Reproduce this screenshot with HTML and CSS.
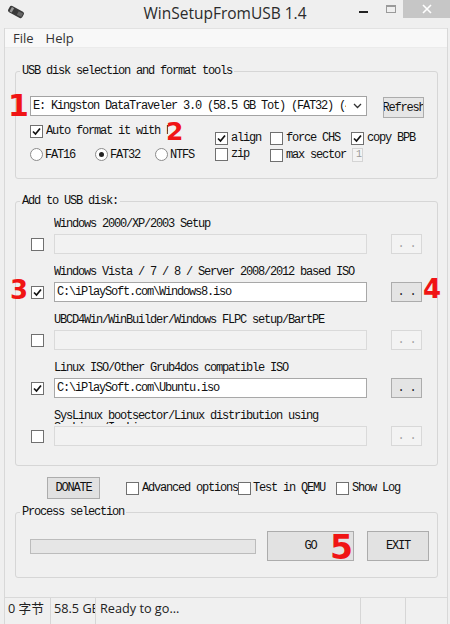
FILE: index.html
```
<!DOCTYPE html>
<html>
<head>
<meta charset="utf-8">
<title>WinSetupFromUSB 1.4</title>
<link rel="stylesheet" href="styles.css">
</head>
<body>
<div class="window">
  <div class="titlebar">
    <div class="tb-left">
      <svg class="app-icon" width="18" height="14" viewBox="0 0 18 14">
        <g transform="rotate(28 9 7)">
          <rect x="1" y="3.5" width="16" height="7" rx="2" fill="#3a3a3a"/>
          <rect x="3" y="4.5" width="2.5" height="5" fill="#9a9a9a"/>
          <rect x="11" y="5" width="5" height="4" fill="#666"/>
        </g>
      </svg>
    </div>
    <div class="title">WinSetupFromUSB 1.4</div>
    <div class="tb-right">
      <span class="ctl-min"></span>
      <span class="ctl-max"></span>
      <span class="ctl-close">
        <svg width="10" height="10" viewBox="0 0 10 10"><path d="M1 1L9 9M9 1L1 9" stroke="#fff" stroke-width="1.6"/></svg>
      </span>
    </div>
  </div>

  <div class="client">
    <div class="menubar">
      <span class="menu-item">File</span>
      <span class="menu-item">Help</span>
    </div>

    <div class="main">
      <fieldset class="group">
        <legend>USB disk selection and format tools</legend>
        <div class="usb-body">
          <div class="disk-row">
            <div class="combo">
              <span class="combo-text">E: Kingston DataTraveler 3.0 (58.5 GB Tot) (FAT32) (4</span>
              <svg class="combo-arrow" width="9" height="6" viewBox="0 0 9 6"><path d="M1 1L4.5 4.5L8 1" fill="none" stroke="#333" stroke-width="1.3"/></svg>
            </div>
            <div class="btn btn-refresh"><span>Refresh</span></div>
          </div>
          <div class="opts">
            <div class="opts-left">
              <div class="chk">
                <span class="box"><svg viewBox="0 0 11 11" width="11" height="11"><path d="M2 5.5L4.5 8L9 2.5" fill="none" stroke="#111" stroke-width="1.7"/></svg></span>
                <span class="lbl lbl-auto">Auto format it with FBinst</span>
              </div>
              <div class="radios">
                <span class="radio-item ri-16"><span class="radio"></span><span class="lbl">FAT16</span></span>
                <span class="radio-item ri-32"><span class="radio on"></span><span class="lbl">FAT32</span></span>
                <span class="radio-item"><span class="radio"></span><span class="lbl">NTFS</span></span>
              </div>
            </div>
            <div class="opts-right">
              <div class="chk">
                <span class="box"><svg viewBox="0 0 11 11" width="11" height="11"><path d="M2 5.5L4.5 8L9 2.5" fill="none" stroke="#111" stroke-width="1.7"/></svg></span>
                <span class="lbl">align</span>
              </div>
              <div class="chk"><span class="box"></span><span class="lbl">force CHS</span></div>
              <div class="chk">
                <span class="box"><svg viewBox="0 0 11 11" width="11" height="11"><path d="M2 5.5L4.5 8L9 2.5" fill="none" stroke="#111" stroke-width="1.7"/></svg></span>
                <span class="lbl">copy BPB</span>
              </div>
              <div class="chk"><span class="box"></span><span class="lbl">zip</span></div>
              <div class="chk chk-max"><span class="box"></span><span class="lbl">max sector</span><span class="mini-input">1</span></div>
            </div>
          </div>
        </div>
      </fieldset>

      <fieldset class="group group-add">
        <legend>Add to USB disk:</legend>
        <div class="src-body">
          <div class="src-row">
            <div class="src-label">Windows 2000/XP/2003 Setup</div>
            <div class="src-line">
              <span class="box"></span>
              <div class="field disabled"></div>
              <div class="btn btn-browse disabled">. .</div>
            </div>
          </div>
          <div class="src-row">
            <div class="src-label">Windows Vista / 7 / 8 / Server 2008/2012 based ISO</div>
            <div class="src-line">
              <span class="box"><svg viewBox="0 0 11 11" width="11" height="11"><path d="M2 5.5L4.5 8L9 2.5" fill="none" stroke="#111" stroke-width="1.7"/></svg></span>
              <div class="field">C:\iPlaySoft.com\Windows8.iso</div>
              <div class="btn btn-browse">. .</div>
            </div>
          </div>
          <div class="src-row">
            <div class="src-label">UBCD4Win/WinBuilder/Windows FLPC setup/BartPE</div>
            <div class="src-line">
              <span class="box"></span>
              <div class="field disabled"></div>
              <div class="btn btn-browse disabled">. .</div>
            </div>
          </div>
          <div class="src-row">
            <div class="src-label">Linux ISO/Other Grub4dos compatible ISO</div>
            <div class="src-line">
              <span class="box"><svg viewBox="0 0 11 11" width="11" height="11"><path d="M2 5.5L4.5 8L9 2.5" fill="none" stroke="#111" stroke-width="1.7"/></svg></span>
              <div class="field">C:\iPlaySoft.com\Ubuntu.iso</div>
              <div class="btn btn-browse">. .</div>
            </div>
          </div>
          <div class="src-row">
            <div class="src-label">SysLinux bootsector/Linux distribution using<br>SysLinux/IsoLinux</div>
            <div class="src-line">
              <span class="box"></span>
              <div class="field disabled"></div>
              <div class="btn btn-browse disabled">. .</div>
            </div>
          </div>
        </div>
      </fieldset>

      <div class="bottom-row">
        <div class="btn btn-donate">DONATE</div>
        <div class="chk chk-adv"><span class="box"></span><span class="lbl">Advanced options</span></div>
        <div class="chk chk-qemu"><span class="box"></span><span class="lbl">Test in QEMU</span></div>
        <div class="chk chk-log"><span class="box"></span><span class="lbl">Show Log</span></div>
      </div>

      <fieldset class="group group-proc">
        <legend>Process selection</legend>
        <div class="proc-body">
          <div class="progress"></div>
          <div class="btn btn-go">GO</div>
          <div class="btn btn-exit">EXIT</div>
        </div>
      </fieldset>
    </div>

    <div class="statusbar">
      <span class="sb-part sb-1">0 字节</span>
      <span class="sb-part sb-2">58.5 GB</span>
      <span class="sb-part sb-3">Ready to go...</span>
      <span class="sb-part sb-4"></span>
      <span class="sb-part sb-5"></span>
    </div>
  </div>

  <span class="mark mark-1">1</span>
  <span class="mark mark-2">2</span>
  <span class="mark mark-3">3</span>
  <span class="mark mark-4">4</span>
  <span class="mark mark-5">5</span>
</div>
</body>
</html>
```

FILE: styles.css
```
* { box-sizing: border-box; }

body {
  margin: 0;
  background: #f0f0f0;
}

.window {
  position: relative;
  width: 450px;
  height: 624px;
  background: #efefef;
  display: flex;
  flex-direction: column;
  overflow: hidden;
  font-family: "Liberation Mono", monospace;
  font-size: 12px;
  letter-spacing: -1.2px;
  color: #111;
}

/* title bar */
.titlebar {
  height: 28px;
  flex: none;
  display: grid;
  grid-template-columns: 1fr auto 1fr;
}
.tb-left { padding: 5px 0 0 7px; }
.app-icon { display: block; }
.title {
  font-family: "Open Sans", sans-serif;
  font-size: 15.5px;
  letter-spacing: 0;
  line-height: 26px;
  color: #2b2b2b;
}
.tb-right {
  display: flex;
  justify-content: flex-end;
  align-items: flex-start;
}
.ctl-min {
  width: 9px;
  height: 2px;
  background: #222;
  margin-top: 11px;
  margin-right: 18px;
}
.ctl-max {
  width: 10px;
  height: 8px;
  border: 1px solid #9a9a9a;
  border-top-width: 2px;
  margin-top: 5px;
  margin-right: 7px;
}
.ctl-close {
  width: 47px;
  height: 18px;
  background: #c6c6c6;
  display: flex;
  align-items: center;
  justify-content: center;
}

/* client */
.client {
  flex: 1;
  min-height: 0;
  display: flex;
  flex-direction: column;
  margin: 0 2px 0 4px;
  border-left: 1px solid #d8d8d8;
  border-right: 1px solid #d8d8d8;
  background: #f0f0f0;
}

.menubar {
  height: 20px;
  flex: none;
  background: #f8f8f8;
  border-top: 1px solid #e2e2e2;
  border-bottom: 1px solid #ebebeb;
  display: flex;
  align-items: center;
  gap: 12px;
  padding-left: 8px;
  font-family: "Open Sans", sans-serif;
  font-size: 13px;
  letter-spacing: 0;
  color: #333;
}

.main {
  flex: 1;
  padding-top: 16px;
}

/* group boxes */
.group {
  margin: 0 9px 0 10px;
  padding: 0;
  border: 1px solid #d6d6d6;
  border-radius: 3px;
  min-width: 0;
}
.group legend {
  margin-left: 4px;
  padding: 0 2px;
  line-height: 14px;
}
.group-add { margin-top: 15px; }
.group-proc { margin-top: 6px; }

.usb-body { padding: 18px 0 16px 14px; }

.disk-row {
  display: flex;
  align-items: flex-start;
}
.combo {
  width: 337px;
  height: 20px;
  border: 1px solid #a3a3a3;
  background: #fff;
  display: flex;
  align-items: center;
  padding-left: 2px;
}
.combo-text {
  width: 313px;
  overflow: hidden;
  white-space: nowrap;
  flex: none;
}
.combo-arrow { margin-left: 7px; flex: none; }

.btn {
  border: 1px solid #acacac;
  background: #e2e2e2;
  display: flex;
  align-items: center;
  justify-content: center;
  overflow: hidden;
  white-space: nowrap;
  color: #111;
}
.btn-refresh {
  margin-left: 16px;
  margin-top: 1px;
  width: 41px;
  height: 21px;
  background: #e6e6e6;
}
.btn-refresh span { flex: none; }

.opts {
  display: flex;
  margin-top: 6px;
}
.opts-left { width: 185px; }

.chk {
  display: flex;
  align-items: center;
  height: 13px;
}
.box {
  width: 13px;
  height: 13px;
  flex: none;
  border: 1px solid #707070;
  background: #fff;
  display: flex;
  align-items: center;
  justify-content: center;
}
.box svg { display: block; }
.chk .lbl { margin-left: 3px; white-space: nowrap; line-height: 13px; }
.lbl-auto {
  width: 122px;
  overflow: hidden;
}
.opts-left .chk { height: 14px; }

.radios {
  display: flex;
  align-items: center;
  margin-top: 10px;
  height: 13px;
}
.radio-item {
  display: flex;
  align-items: center;
}
.radio-item .lbl { margin-left: 2px; }
.ri-16 { width: 65px; }
.ri-32 { width: 60px; }
.radio {
  width: 13px;
  height: 13px;
  border-radius: 50%;
  border: 1px solid #8b8b8b;
  background: #fff;
  display: flex;
  align-items: center;
  justify-content: center;
}
.radio.on::after {
  content: "";
  width: 5px;
  height: 5px;
  border-radius: 50%;
  background: #222;
}

.opts-right {
  display: grid;
  grid-template-columns: 55px 81px auto;
  row-gap: 3px;
  margin-top: 8px;
}
.chk-max { height: 14px; }
.mini-input {
  margin-left: 6px;
  width: 16px;
  height: 14px;
  border: 1px solid #d4d4d4;
  background: #f3f3f3;
  color: #9a9a9a;
  padding-left: 3px;
  line-height: 12px;
  font-size: 10px;
  letter-spacing: 0;
}

/* add to usb rows */
.src-body {
  display: flex;
  flex-direction: column;
  gap: 11px;
  padding: 9px 0 19px 15px;
}
.src-label {
  height: 15px;
  margin-bottom: 2px;
  padding-top: 1px;
  line-height: 12px;
  overflow: hidden;
  margin-left: 23px;
  white-space: nowrap;
}
.src-line {
  display: flex;
  align-items: center;
  height: 20px;
}
.src-line .box { margin-right: 10px; }
.field {
  width: 313px;
  height: 20px;
  border: 1px solid #a8a8a8;
  background: #fff;
  padding-left: 2px;
  line-height: 18px;
  white-space: nowrap;
  overflow: hidden;
}
.field.disabled {
  border-color: #dadada;
  background: #f2f2f2;
}
.btn-browse {
  margin-left: 24px;
  width: 31px;
  height: 20px;
  background: #e4e4e4;
  color: #222;
}
.btn-browse.disabled {
  border-color: #d8d8d8;
  background: #f3f3f3;
  color: #a5a5a5;
}

/* bottom controls */
.bottom-row {
  display: flex;
  align-items: center;
  height: 22px;
  margin: 11px 0 0 42px;
}
.btn-donate {
  width: 53px;
  height: 22px;
  background: #e1e1e1;
}
.chk-adv { margin-left: 26px; }
.chk-qemu .lbl { margin-left: 2px; }
.chk-log { margin-left: 11px; }

.proc-body {
  display: flex;
  align-items: center;
  padding: 12px 0 16px 14px;
}
.progress {
  width: 226px;
  height: 15px;
  border: 1px solid #bcbcbc;
  background: #e6e6e6;
}
.btn-go {
  margin-left: 11px;
  width: 87px;
  height: 30px;
}
.btn-exit {
  margin-left: 13px;
  width: 62px;
  height: 30px;
}

/* status bar */
.statusbar {
  margin-top: auto;
  height: 27px;
  flex: none;
  display: flex;
  border-top: 1px solid #d9d9d9;
  font-family: "Open Sans", "Noto Sans CJK SC", sans-serif;
  font-size: 12.7px;
  letter-spacing: 0;
  color: #222;
  line-height: 20px;
}
.sb-part {
  border-right: 1px solid #d6d6d6;
  overflow: hidden;
  white-space: nowrap;
  padding-left: 3px;
}
.sb-1 { width: 46px; }
.sb-2 { width: 45px; padding-left: 3px; }
.sb-3 { width: 265px; padding-left: 4px; }
.sb-4 { width: 45px; }
.sb-5 { flex: 1; border-right: none; }

/* red annotation numbers */
.mark {
  position: absolute;
  font-family: "DejaVu Sans", sans-serif;
  font-weight: bold;
  color: #f01414;
  line-height: 1;
  letter-spacing: 0;
}
.mark-1 { left: 8px; top: 91px; font-size: 30px; }
.mark-2 { left: 166px; top: 119px; font-size: 25px; }
.mark-3 { left: 10px; top: 277px; font-size: 26px; }
.mark-4 { left: 423px; top: 276px; font-size: 26px; }
.mark-5 { left: 330px; top: 531px; font-size: 33px; }
```
